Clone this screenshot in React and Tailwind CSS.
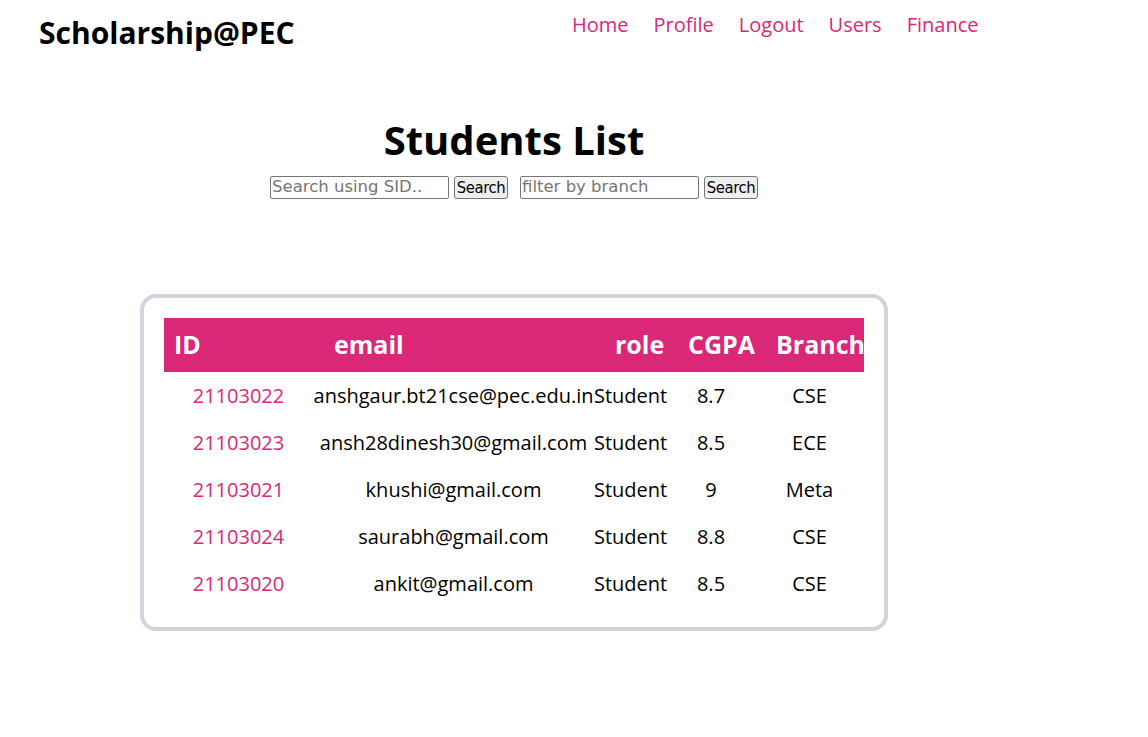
import React from 'react'

const students = [
  { id: '21103022', email: 'anshgaur.bt21cse@pec.edu.in', role: 'Student', cgpa: '8.7', branch: 'CSE' },
  { id: '21103023', email: 'ansh28dinesh30@gmail.com', role: 'Student', cgpa: '8.5', branch: 'ECE' },
  { id: '21103021', email: 'khushi@gmail.com', role: 'Student', cgpa: '9', branch: 'Meta' },
  { id: '21103024', email: 'saurabh@gmail.com', role: 'Student', cgpa: '8.8', branch: 'CSE' },
  { id: '21103020', email: 'ankit@gmail.com', role: 'Student', cgpa: '8.5', branch: 'CSE' },
]

const navLinks = ['Home', 'Profile', 'Logout', 'Users', 'Finance']

export default function App() {
  return (
    <div className="min-h-[737px] bg-white font-['Open_Sans',sans-serif] text-black">
      {/* Navbar */}
      <header className="flex items-start h-[60px]">
        <div className="w-[572px] pl-[39px] pt-[12px] text-[30px] font-bold leading-[41px]">Scholarship@PEC</div>
        <nav className="flex gap-[25px] pt-[11px]">
          {navLinks.map(l => (
            <a key={l} href="#" className="text-[20px] leading-[28px] text-[#db2777]">{l}</a>
          ))}
        </nav>
      </header>

      {/* Main */}
      <main className="w-[1028px] flex flex-col items-center">
        <h1 className="mt-[53px] text-[40px] font-bold leading-[54px]">Students List</h1>
        <div className="flex items-center mt-[9px] font-['DejaVu_Sans',sans-serif]">
          <input
            className="w-[179px] h-[23px] border border-[#767676] rounded-[2px] px-[1px] text-[16.5px] placeholder:text-[#757575] outline-none"
            placeholder="Search using SID.."
          />
          <button className="ml-[5px] w-[54px] h-[23px] bg-[#efefef] border border-[#767676] rounded-[3px] text-[16.5px] leading-[20px] font-['DejaVu_Sans_Condensed',sans-serif] tracking-[-0.4px]">
            Search
          </button>
          <input
            className="ml-[12px] w-[179px] h-[23px] border border-[#767676] rounded-[2px] px-[1px] text-[16.5px] placeholder:text-[#757575] outline-none"
            placeholder="filter by branch"
          />
          <button className="ml-[5px] w-[54px] h-[23px] bg-[#efefef] border border-[#767676] rounded-[3px] text-[16.5px] leading-[20px] font-['DejaVu_Sans_Condensed',sans-serif] tracking-[-0.4px]">
            Search
          </button>
        </div>

        {/* Table card */}
        <div className="mt-[95px] w-[748px] border-4 border-[#d1d5db] rounded-[16px] p-[20px]">
          <table className="w-[700px] table-fixed border-collapse">
            <colgroup>
              <col className="w-[149px]" />
              <col className="w-[281px]" />
              <col className="w-[73px]" />
              <col className="w-[88px]" />
              <col className="w-[109px]" />
            </colgroup>
            <thead>
              <tr className="bg-[#db2777] text-white h-[54px] text-[25px] font-bold">
                <th className="text-left pl-[10px]">ID</th>
                <th className="text-left pl-[21px]">email</th>
                <th className="text-left pl-[21px]">role</th>
                <th className="text-left pl-[21px] whitespace-nowrap">CGPA</th>
                <th className="text-left pl-[21px] whitespace-nowrap">Branch</th>
              </tr>
            </thead>
            <tbody className="text-[20px]">
              {students.map(s => (
                <tr key={s.id} className="h-[47px]">
                  <td className="text-center text-[#db2777]">{s.id}</td>
                  <td className="text-center whitespace-nowrap">{s.email}</td>
                  <td className="text-center">{s.role}</td>
                  <td className="text-center">{s.cgpa}</td>
                  <td className="text-center">{s.branch}</td>
                </tr>
              ))}
            </tbody>
          </table>
        </div>
      </main>
    </div>
  )
}
